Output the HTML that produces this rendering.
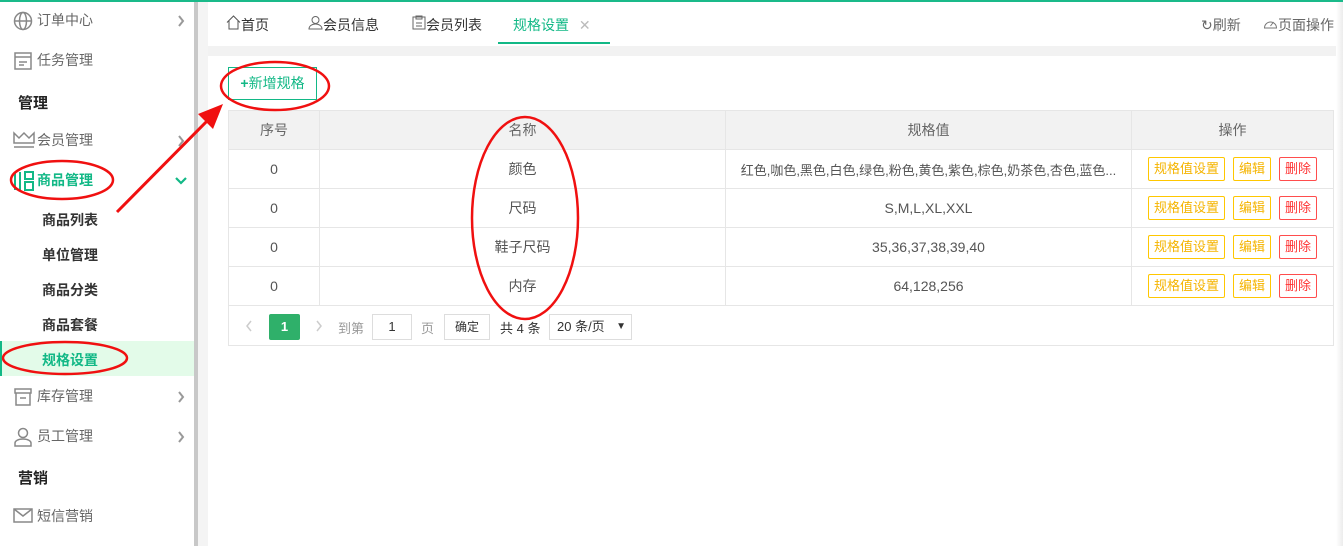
<!DOCTYPE html>
<html><head><meta charset="utf-8"><style>
*{margin:0;padding:0;box-sizing:border-box}
body{width:1343px;height:546px;overflow:hidden;background:#f2f2f2;font-family:"Liberation Sans","Noto Sans CJK SC",sans-serif;font-size:14px;color:#333;position:relative}
.topline{position:absolute;left:0;top:0;width:1343px;height:2px;background:#1aba8a;z-index:3}
.side{position:absolute;left:0;top:0;width:194px;height:546px;background:#fff}
.sb{position:absolute;left:194px;top:0;width:4px;height:546px;background:#c8c8c8}
.gut{position:absolute;left:198px;top:0;width:10px;height:546px;background:#f4f4f4}
.it{position:absolute;left:0;width:194px;height:36px;line-height:36px;color:#666;font-size:14px}
.it .ic{position:absolute;left:13px;top:9px}
.it .tx{position:absolute;left:37px}
.it .ar{position:absolute;left:177px;top:13px}
.hd{position:absolute;left:18px;font-weight:bold;color:#222;font-size:15px}
.sub{position:absolute;left:42px;font-weight:bold;color:#333;font-size:14px}
.main{position:absolute;left:208px;top:0;width:1135px;height:546px;background:#fff}
.tabs{position:absolute;left:0;top:0;width:1135px;height:46px;background:#fff}
.strip{position:absolute;left:0;top:46px;width:1135px;height:10px;background:#f2f2f2}
.tab{position:absolute;top:15px;font-size:14px;color:#333}
table{position:absolute;left:228px;top:110px;border-collapse:collapse;width:1106px;font-size:14px;color:#555}
td,th{border:1px solid #e6e6e6;height:39px;text-align:center;font-weight:normal}
th{background:#f2f2f2;color:#666}
.b{display:inline-block;border:1px solid;border-radius:2px;height:24px;line-height:22px;padding:0 5px;font-size:13px;margin:0 4px}
.y{border-color:#ffc700;color:#f5b400}
.r{border-color:#ff4d4d;color:#ff3333}
.pg{position:absolute;left:228px;top:305px;width:1106px;height:41px;border:1px solid #e6e6e6;border-top:none;font-size:13px;color:#999}
.pg span{position:absolute}
</style></head><body>
<div class="topline"></div>
<div class="side">
 <div class="it" style="top:2px"><svg class="ic" width="20" height="20" viewBox="0 0 20 20" fill="none" stroke="#888" stroke-width="1.5"><circle cx="10" cy="10" r="8.5"/><ellipse cx="10" cy="10" rx="3.5" ry="8.5"/><path d="M1.5 10h17"/></svg><span class="tx">订单中心</span><svg class="ar" width="8" height="12" viewBox="0 0 8 12" fill="none" stroke="#999" stroke-width="2"><path d="M2 1l4 5-4 5"/></svg></div>
 <div class="it" style="top:42px"><svg class="ic" width="20" height="20" viewBox="0 0 20 20" fill="none" stroke="#888" stroke-width="1.5"><rect x="2" y="2" width="16" height="16"/><path d="M2 6h16M6 11h8M6 14h5"/></svg><span class="tx">任务管理</span></div>
 <div class="hd" style="top:92px">管理</div>
 <div class="it" style="top:122px"><svg class="ic" width="22" height="18" viewBox="0 0 22 18" fill="none" stroke="#888" stroke-width="1.5"><path d="M1 2l5 5 5-5 5 5 5-5v10H1zM1 16h20"/></svg><span class="tx">会员管理</span><svg class="ar" width="8" height="12" viewBox="0 0 8 12" fill="none" stroke="#999" stroke-width="2"><path d="M2 1l4 5-4 5"/></svg></div>
 <div class="it" style="top:162px;color:#12b886;font-weight:bold"><svg class="ic" width="22" height="20" viewBox="0 0 22 20" fill="none" stroke="#12b886" stroke-width="2"><path d="M2 1v18M7 1v18"/><rect x="12" y="1" width="8" height="7"/><rect x="12" y="11" width="8" height="8"/></svg><span class="tx">商品管理</span><svg style="position:absolute;left:175px;top:15px" width="12" height="8" viewBox="0 0 12 8" fill="none" stroke="#12b886" stroke-width="2.2"><path d="M1 1l5 5 5-5"/></svg></div>
 <div class="sub" style="top:210px">商品列表</div>
 <div class="sub" style="top:245px">单位管理</div>
 <div class="sub" style="top:280px">商品分类</div>
 <div class="sub" style="top:315px">商品套餐</div>
 <div style="position:absolute;left:0;top:341px;width:194px;height:35px;background:#e3fbe9;border-left:2px solid #12b886"></div>
 <div class="sub" style="top:350px;color:#12b886">规格设置</div>
 <div class="it" style="top:378px"><svg class="ic" width="20" height="20" viewBox="0 0 20 20" fill="none" stroke="#888" stroke-width="1.5"><path d="M2 2h16v4H2zM3 6v12h14V6M7 11h6"/></svg><span class="tx">库存管理</span><svg class="ar" width="8" height="12" viewBox="0 0 8 12" fill="none" stroke="#999" stroke-width="2"><path d="M2 1l4 5-4 5"/></svg></div>
 <div class="it" style="top:418px"><svg class="ic" width="20" height="20" viewBox="0 0 20 20" fill="none" stroke="#888" stroke-width="1.5"><circle cx="10" cy="6" r="4.5"/><path d="M2 19v-3c0-2 3-4 8-4s8 2 8 4v3z"/></svg><span class="tx">员工管理</span><svg class="ar" width="8" height="12" viewBox="0 0 8 12" fill="none" stroke="#999" stroke-width="2"><path d="M2 1l4 5-4 5"/></svg></div>
 <div class="hd" style="top:467px">营销</div>
 <div class="it" style="top:498px"><svg class="ic" width="20" height="18" viewBox="0 0 20 18" fill="none" stroke="#888" stroke-width="1.5"><rect x="1" y="2" width="18" height="13"/><path d="M1 2l9 7 9-7"/></svg><span class="tx">短信营销</span></div>
</div>
<div class="sb"></div><div class="gut"></div>
<div class="main">
 <div class="tabs">
  <div class="tab" style="left:18px"><svg width="15" height="15" viewBox="0 0 15 15" fill="none" stroke="#555"><path d="M1 7.5L7.5 1 14 7.5M3 6v8h9V6"/></svg>首页</div>
  <div class="tab" style="left:100px"><svg width="15" height="15" viewBox="0 0 15 15" fill="none" stroke="#666"><circle cx="7.5" cy="5" r="3.5"/><path d="M1 14c0-3 3-5 6.5-5s6.5 2 6.5 5z"/></svg>会员信息</div>
  <div class="tab" style="left:204px"><svg width="14" height="15" viewBox="0 0 14 15" fill="none" stroke="#666"><rect x="1" y="2" width="12" height="12"/><path d="M4 1h6v3H4zM4 8h6M4 11h6"/></svg>会员列表</div>
  <div class="tab" style="left:305px;color:#12b886">规格设置 <span style="color:#bbb;margin-left:6px">✕</span></div>
  <div style="position:absolute;left:290px;top:42px;width:112px;height:2px;background:#12b886"></div>
  <div class="tab" style="left:993px;color:#666">↻刷新</div>
  <div class="tab" style="left:1055px;color:#666"><svg width="15" height="14" viewBox="0 0 15 14" fill="none" stroke="#777"><path d="M1.5 12a6 6 0 1 1 12 0zM7.5 10l3-4"/></svg>页面操作</div>
 </div>
 <div class="strip"></div>
</div>
<div style="position:absolute;left:228px;top:67px;width:89px;height:33px;border:1px solid #12b886;color:#12b886;line-height:31px;text-align:center;font-size:14px;background:#fff"><b>+</b>新增规格</div>
<table>
<tr><th style="width:91px">序号</th><th style="width:406px">名称</th><th style="width:406px">规格值</th><th>操作</th></tr>
<tr><td>0</td><td>颜色</td><td style="font-size:13px;white-space:nowrap">红色,咖色,黑色,白色,绿色,粉色,黄色,紫色,棕色,奶茶色,杏色,蓝色...</td><td><span class="b y">规格值设置</span><span class="b y">编辑</span><span class="b r">删除</span></td></tr>
<tr><td>0</td><td>尺码</td><td>S,M,L,XL,XXL</td><td><span class="b y">规格值设置</span><span class="b y">编辑</span><span class="b r">删除</span></td></tr>
<tr><td>0</td><td>鞋子尺码</td><td>35,36,37,38,39,40</td><td><span class="b y">规格值设置</span><span class="b y">编辑</span><span class="b r">删除</span></td></tr>
<tr><td>0</td><td>内存</td><td>64,128,256</td><td><span class="b y">规格值设置</span><span class="b y">编辑</span><span class="b r">删除</span></td></tr>
</table>
<div class="pg">
 <svg style="position:absolute;left:16px;top:15px" width="8" height="12" viewBox="0 0 8 12" fill="none" stroke="#ccc" stroke-width="1.5"><path d="M6 1L2 6l4 5"/></svg>
 <span style="left:40px;top:9px;width:31px;height:26px;background:#2fb06a;color:#fff;text-align:center;line-height:26px;border-radius:2px;font-weight:bold">1</span>
 <svg style="position:absolute;left:86px;top:15px" width="8" height="12" viewBox="0 0 8 12" fill="none" stroke="#ccc" stroke-width="1.5"><path d="M2 1l4 5-4 5"/></svg>
 <span style="left:109px;top:13px">到第</span>
 <span style="left:143px;top:9px;width:40px;height:26px;border:1px solid #ddd;text-align:center;line-height:24px;color:#333">1</span>
 <span style="left:192px;top:13px">页</span>
 <span style="left:215px;top:9px;width:46px;height:26px;border:1px solid #ddd;text-align:center;line-height:24px;color:#333;font-size:12px">确定</span>
 <span style="left:271px;top:13px;color:#333">共 4 条</span>
 <span style="left:320px;top:9px;width:83px;height:26px;border:1px solid #ddd;line-height:24px;color:#333;padding-left:7px">20 条/页<i style="position:absolute;right:5px;font-style:normal;font-size:10px">▼</i></span>
</div>
<div style="position:absolute;left:1336px;top:0;width:7px;height:546px;background:linear-gradient(to right,#fff,#ececec)"></div>
<svg style="position:absolute;left:0;top:0" width="1343" height="546" fill="none" stroke="#f01010" stroke-width="2.5">
 <ellipse cx="275" cy="86" rx="54" ry="24"/>
 <ellipse cx="525" cy="218" rx="53" ry="101"/>
 <ellipse cx="62" cy="180" rx="51" ry="19"/>
 <ellipse cx="65" cy="358" rx="62" ry="16"/>
 <path d="M117 212L212 116" stroke-width="3"/>
 <path d="M223 104l-25 10 15 15z" fill="#f01010" stroke="none"/>
</svg>
</body></html>
